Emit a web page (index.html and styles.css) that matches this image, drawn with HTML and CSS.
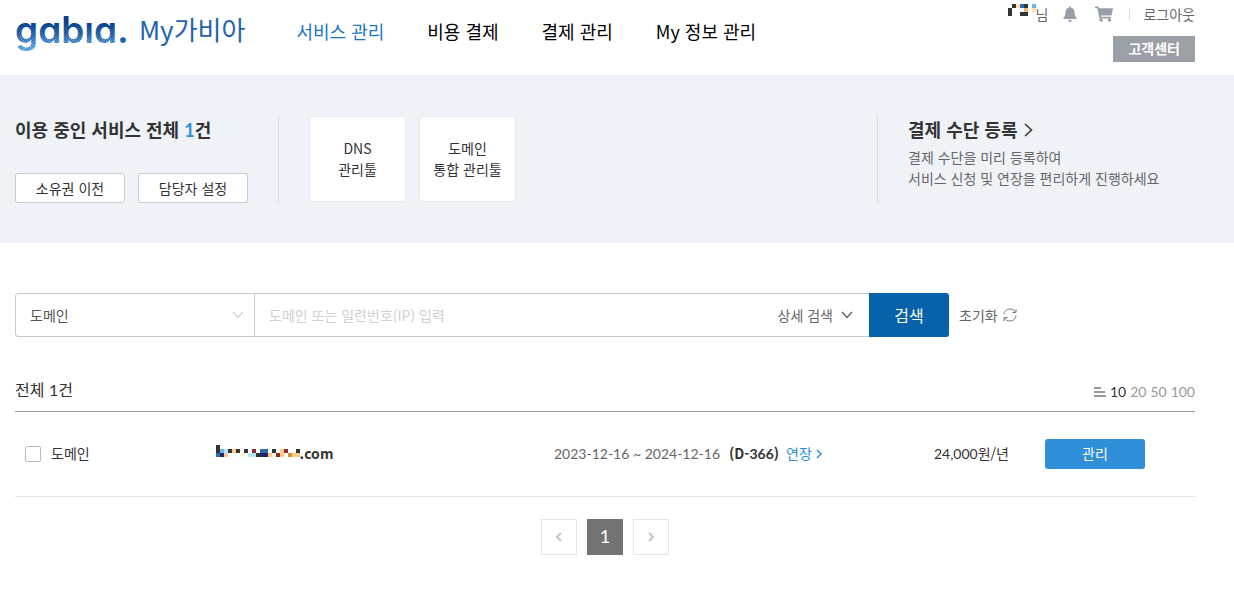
FILE: index.html
```
<!DOCTYPE html>
<html lang="ko">

<head>
    <meta charset="UTF-8">
    <meta name="viewport" content="width=device-width, initial-scale=1.0">
    <title>My가비아 - 서비스 관리</title>
    <link rel="stylesheet" href="styles.css">
</head>

<body>
    <!-- Header -->
    <header class="header">
        <a href="#" class="logo">
            <svg class="logo-mark" width="118" height="56" viewBox="0 0 118 56" role="img" aria-label="gabia">
                <defs>
                    <linearGradient id="logoFill" x1="0" y1="0" x2="0" y2="1">
                        <stop offset="0.2" stop-color="#0a3f8c"></stop>
                        <stop offset="0.6" stop-color="#0b4c9c"></stop>
                        <stop offset="0.8" stop-color="#1c70bb"></stop>
                        <stop offset="1" stop-color="#2596d6"></stop>
                    </linearGradient>
                    <linearGradient id="raysFade" x1="0" y1="0" x2="0" y2="1">
                        <stop offset="0.1" stop-color="#000"></stop>
                        <stop offset="0.6" stop-color="#fff"></stop>
                    </linearGradient>
                    <pattern id="logoRays" width="2" height="2" patternUnits="userSpaceOnUse" patternTransform="rotate(40)">
                        <rect width="1" height="2" fill="#fff"></rect>
                    </pattern>
                    <mask id="raysMask">
                        <rect y="17" width="118" height="39" fill="url(#raysFade)"></rect>
                    </mask>
                </defs>
                <text class="logo-text" x="0" y="40" fill="url(#logoFill)">gabıa.</text>
                <rect y="17" width="103" height="39" fill="url(#logoRays)" opacity="0.5" mask="url(#raysMask)"></rect>
            </svg>
            <span class="logo-name">My가비아</span>
        </a>
        <nav class="menu">
            <a href="#" class="active">서비스 관리</a>
            <a href="#">비용 결제</a>
            <a href="#">결제 관리</a>
            <a href="#">My 정보 관리</a>
        </nav>
        <div class="user">
            <div class="user-row">
                <span class="user-name">
                    <svg width="28" height="12" viewBox="0 0 28 12" shape-rendering="crispEdges" aria-hidden="true">
                        <path fill="#333" d="M4 0h4v4H4zM16 0h4v4h-4zM0 4h4v8H0zM12 8h8v4h-8z"></path>
                        <path fill="#2f6bb5" d="M12 0h4v4h-4z"></path>
                        <path fill="#ffe4b0" d="M8 0h4v4H8zM24 4h4v4h-4z"></path>
                        <path fill="#eeb57c" d="M16 4h4v4h-4z"></path>
                        <path fill="#6db3f2" d="M24 0h4v4h-4z"></path>
                    </svg>님
                </span>
                <a href="#" class="icon" aria-label="알림">
                    <svg width="14" height="16" viewBox="0 0 14 16"><path d="M7 0.5c.7 0 1 .5 1 1.2 2.3.5 3.6 2.2 3.6 4.6 0 3.200.7 4.100 1.800 5.200.6.6.3 1.500-.6 1.500H1.200c-.9 0-1.200-.9-.6-1.500C1.700 10.400 2.400 9.500 2.400 6.300 2.400 3.900 3.700 2.200 6 1.700 6 1 6.300.5 7 .5zM5 14h4c0 1.100-.9 1.800-2 1.800S5 15.100 5 14z"></path></svg>
                </a>
                <a href="#" class="icon" aria-label="장바구니">
                    <svg width="18" height="16" viewBox="0 0 18 16"><path d="M0 .5h3.500l.4 1.800H18l-1.500 7.200H5.800l.3 1.300H16v1.700H4.500L2.300 2.200H0z"></path><circle cx="6" cy="14" r="1.700"></circle><circle cx="14.500" cy="14" r="1.700"></circle></svg>
                </a>
                <a href="#" class="logout">로그아웃</a>
            </div>
            <a href="#" class="btn-center">고객센터</a>
        </div>
    </header>

    <!-- Summary -->
    <section class="summary">
        <div class="summary-total">
            <h2>이용 중인 서비스 전체 <em class="num">1</em>건</h2>
            <div class="summary-buttons">
                <button type="button">소유권 이전</button>
                <button type="button">담당자 설정</button>
            </div>
        </div>
        <div class="tools">
            <a href="#">DNS<br>관리툴</a>
            <a href="#">도메인<br>통합 관리툴</a>
        </div>
        <div class="payment">
            <h2><a href="#">결제 수단 등록
                <svg width="9" height="14" viewBox="0 0 9 14"><path d="M1 1l6.500 6L1 13"></path></svg>
            </a></h2>
            <p>결제 수단을 미리 등록하여<br>서비스 신청 및 연장을 편리하게 진행하세요</p>
        </div>
    </section>

    <main class="container">
        <!-- Search -->
        <form class="search">
            <select class="search-type" aria-label="서비스 종류">
                <option>도메인</option>
            </select>
            <div class="search-field">
                <input type="text" placeholder="도메인 또는 일련번호(IP) 입력" aria-label="검색어">
                <button type="button" class="btn-detail">상세 검색
                    <svg width="12" height="8" viewBox="0 0 12 8"><path d="M1 1l5 5.500L11 1"></path></svg>
                </button>
            </div>
            <button type="button" class="btn-search">검색</button>
            <button type="reset" class="btn-reset">초기화
                <svg width="14" height="14" viewBox="0 0 14 14"><path d="M1 6.500C1 3.300 3.700 1 7 1c2.300 0 4.200 1 5.300 3M13 1v3.500H9.500M13 7.500C13 10.700 10.300 13 7 13c-2.300 0-4.200-1-5.300-3M1 13V9.500h3.500"></path></svg>
            </button>
        </form>

        <!-- Service list -->
        <div class="list-head">
            <p>전체 <span class="num">1</span>건</p>
            <div class="per-page num">
                <svg width="12" height="10" viewBox="0 0 12 10" shape-rendering="crispEdges" aria-hidden="true"><path d="M0 0h7v2H0zM0 4h11v2H0zM0 8h12v2H0z"></path></svg>
                <a href="#" class="active">10</a>
                <a href="#">20</a>
                <a href="#">50</a>
                <a href="#">100</a>
            </div>
        </div>
        <table class="list">
            <colgroup>
                <col class="col-type">
                <col class="col-name">
                <col class="col-date">
                <col class="col-price">
                <col class="col-manage">
            </colgroup>
            <tbody>
                <tr>
                    <td><label class="check"><input type="checkbox"> 도메인</label></td>
                    <td class="name">
                        <svg width="84" height="12" viewBox="0 0 84 12" shape-rendering="crispEdges" aria-hidden="true">
                            <path fill="#333" d="M0 0h4v8H0zM12 4h4v4h-4zM20 4h4v4h-4zM28 4h4v4h-4zM40 8h8v4h-8zM56 4h4v4h-4zM80 4h4v4h-4z"></path>
                            <path fill="#2f6bb5" d="M0 8h4v4H0zM44 4h8v4h-8z"></path>
                            <path fill="#1f2766" d="M4 8h4v4H4zM44 8h8v4h-8z"></path>
                            <path fill="#6db3f2" d="M4 4h4v4H4z"></path>
                            <path fill="#b3e5ff" d="M8 4h4v4H8zM32 8h8v4h-8z"></path>
                            <path fill="#ffc98a" d="M8 8h4v4H8zM16 4h4v4h-4zM52 8h4v4h-4zM64 4h4v4h-4zM64 8h4v4h-4zM76 8h8v4h-8z"></path>
                            <path fill="#8b2f35" d="M36 4h4v4h-4zM68 4h4v4h-4zM60 8h4v4h-4z"></path>
                            <path fill="#fff8d0" d="M24 8h4v4h-4zM56 8h4v4h-4z"></path>
                            <path fill="#d29235" d="M72 8h4v4h-4z"></path>
                        </svg>.com
                    </td>
                    <td class="date"><span class="num">2023-12-16 ~ 2024-12-16</span> <b>(D-<span class="num">366</span>)</b>
                        <a href="#">연장 <svg width="6" height="10" viewBox="0 0 6 10"><path d="M1 1l4 4-4 4"></path></svg></a>
                    </td>
                    <td class="price"><span class="num">24,000</span>원/년</td>
                    <td class="manage"><button type="button">관리</button></td>
                </tr>
            </tbody>
        </table>

        <!-- Paging -->
        <nav class="paging">
            <a href="#" aria-label="이전"><svg width="6" height="10" viewBox="0 0 6 10"><path d="M5 1L1 5l4 4"></path></svg></a>
            <a href="#" class="active num">1</a>
            <a href="#" aria-label="다음"><svg width="6" height="10" viewBox="0 0 6 10"><path d="M1 1l4 4-4 4"></path></svg></a>
        </nav>
    </main>
</body>

</html>
```
FILE: styles.css
```
* {
    margin: 0;
    padding: 0;
    box-sizing: border-box;
}

body {
    font-family: "Noto Sans CJK KR", sans-serif;
    font-size: 14px;
    line-height: 21px;
    color: #333;
    background: #fff;
}

a {
    color: inherit;
    text-decoration: none;
}

button,
input,
select {
    font: inherit;
    color: inherit;
}

button {
    border: none;
    background: none;
    cursor: pointer;
}

svg {
    fill: none;
}

.num {
    font-family: Lato, "Noto Sans CJK KR", sans-serif;
}

/* Header */
.header {
    display: flex;
    align-items: flex-start;
    height: 75px;
    padding: 0 39px 0 15px;
}

.logo {
    display: flex;
    gap: 6px;
    padding-top: 3px;
}

.logo-text {
    font-family: Inter, sans-serif;
    font-size: 37px;
    font-weight: 600;
    font-feature-settings: "cv11";
}

.logo-name {
    font-size: 26px;
    line-height: 52px;
    color: #1f63ae;
}

.menu {
    display: flex;
    gap: 43px;
    margin-left: 51px;
    padding-top: 17px;
    font-size: 18px;
    line-height: 28px;
    color: #000;
}

.menu .active {
    color: #1a78c5;
}

.user {
    display: flex;
    flex-direction: column;
    align-items: flex-end;
    margin-left: auto;
    color: #666;
}

.user-row {
    display: flex;
    align-items: center;
    height: 28px;
    margin-bottom: 8px;
}

.user-name {
    display: flex;
    align-items: center;
}

.user-name svg {
    margin-bottom: 8px;
}

.icon {
    display: flex;
    margin-left: 15px;
    fill: #999fa6;
}

.icon svg {
    fill: inherit;
}

.icon + .icon {
    margin-left: 18px;
}

.logout {
    margin-left: 16px;
    padding-left: 13px;
    line-height: 12px;
    border-left: 1px solid #ddd;
}

.btn-center {
    padding: 0 15px 2px;
    line-height: 24px;
    font-weight: bold;
    color: #fff;
    background: #9b9fa6;
}

/* Summary */
.summary {
    display: flex;
    padding: 41px 39px 40px 15px;
    background: #eff3f8;
}

.summary h2 {
    font-size: 18px;
    line-height: 26px;
}

.summary h2 em {
    font-style: normal;
    color: #2f8fd8;
}

.summary-total {
    padding-right: 30px;
    border-right: 1px solid #dadde0;
}

.summary-buttons {
    display: flex;
    gap: 13px;
    margin-top: 30px;
}

.summary-buttons button {
    width: 110px;
    height: 30px;
    line-height: 28px;
    background: #fff;
    border: 1px solid #c8c9cb;
    border-radius: 3px;
}

.tools {
    display: flex;
    align-items: flex-start;
    gap: 13px;
    padding-left: 30px;
}

.tools a {
    width: 97px;
    padding: 21px 0;
    text-align: center;
    background: #fff;
    border: 1px solid #e7e9ec;
    border-radius: 3px;
}

.payment {
    width: 318px;
    margin-left: auto;
    padding-left: 30px;
    border-left: 1px solid #dadde0;
}

.payment svg {
    margin-left: 2px;
    stroke: #333;
    stroke-width: 1.5;
}

.payment p {
    margin-top: 5px;
    color: #666;
}

/* Search */
.container {
    padding: 50px 39px 50px 15px;
}

.search {
    display: flex;
    height: 44px;
}

.search-type {
    width: 240px;
    padding: 0 14px;
    color: #555;
    border: 1px solid #c8c9cb;
    border-radius: 3px 0 0 3px;
    appearance: none;
    background: #fff url("data:image/svg+xml,%3Csvg xmlns='http://www.w3.org/2000/svg' width='12' height='8' fill='none' stroke='%23b4b7bc'%3E%3Cpath d='M1 1l5 5.500L11 1'/%3E%3C/svg%3E") no-repeat right 10px center;
}

.search-field {
    display: flex;
    flex: 1;
    max-width: 614px;
    border: solid #c8c9cb;
    border-width: 1px 0;
}

.search-field input {
    flex: 1;
    min-width: 0;
    padding: 0 14px;
    border: none;
    outline: none;
}

.search-field input::placeholder {
    color: #d0d0d0;
}

.btn-detail,
.btn-reset {
    display: flex;
    align-items: center;
    color: #666;
}

.btn-detail {
    gap: 8px;
    padding-right: 16px;
}

.btn-detail svg {
    stroke: #666;
    stroke-width: 1.5;
}

.btn-search {
    width: 80px;
    font-size: 16px;
    color: #fff;
    background: #0862aa;
    border-radius: 0 3px 3px 0;
}

.btn-reset {
    gap: 5px;
    margin-left: 10px;
}

.btn-reset svg {
    stroke: #777;
}

/* Service list */
.list-head {
    display: flex;
    justify-content: space-between;
    align-items: flex-end;
    margin-top: 39px;
    padding-bottom: 8px;
    border-bottom: 1px solid #999;
}

.list-head p {
    font-size: 16px;
    line-height: 26px;
}

.per-page {
    display: flex;
    align-items: center;
    gap: 4px;
    line-height: 22px;
    color: #999;
}

.per-page svg {
    fill: #999;
}

.per-page .active {
    color: #333;
}

.list {
    width: 100%;
    table-layout: fixed;
    border-collapse: collapse;
}

.list td {
    height: 84px;
    border-bottom: 1px solid #e5e5e5;
}

.col-type {
    width: 17%;
}

.col-date {
    width: 290px;
}

.col-price {
    width: 165px;
}

.col-manage {
    width: 186px;
}

.check {
    display: flex;
    align-items: center;
    gap: 10px;
    padding-left: 10px;
}

.check input {
    width: 16px;
    height: 16px;
    appearance: none;
    border: 1px solid #bbb;
    border-radius: 2px;
}

.check input:checked {
    background: #2f8fd8;
}

.name {
    font-weight: bold;
}

.name svg {
    vertical-align: 2px;
}

.date {
    color: #666;
    white-space: nowrap;
}

.date b {
    margin: 0 3px 0 5px;
    color: #333;
}

.date a {
    color: #2f8fd8;
}

.date svg {
    stroke: #2f8fd8;
    stroke-width: 1.5;
}

.price {
    text-align: right;
}

.manage {
    padding-left: 36px;
}

.manage button {
    width: 100px;
    height: 30px;
    color: #fff;
    background: #2f8fd8;
    border-radius: 3px;
}

/* Paging */
.paging {
    display: flex;
    justify-content: center;
    gap: 10px;
    margin-top: 22px;
}

.paging a {
    display: flex;
    align-items: center;
    justify-content: center;
    width: 36px;
    height: 36px;
    font-size: 18px;
    border: 1px solid #e5e5e5;
}

.paging .active {
    color: #fff;
    background: #737373;
    border-color: #737373;
}

.paging svg {
    stroke: #c3c5cc;
    stroke-width: 2;
}
```
